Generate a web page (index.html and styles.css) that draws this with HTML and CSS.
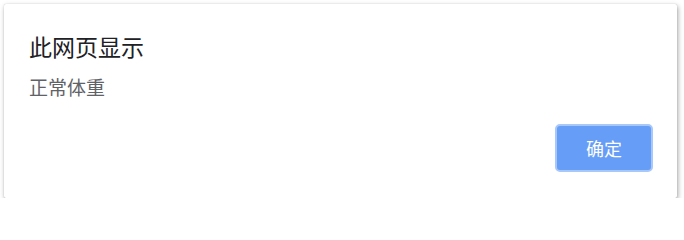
FILE: index.html
```html
<!DOCTYPE html>
<html lang="zh">
<head>
<meta charset="utf-8">
<link rel="stylesheet" href="styles.css">
</head>
<body>
<div class="dialog">
  <div class="title">此网页显示</div>
  <div class="message">正常体重</div>
  <div class="actions">
    <button class="ok">确定</button>
  </div>
</div>
</body>
</html>
```
FILE: styles.css
```css
html, body {
  margin: 0;
  padding: 0;
  background: #ffffff;
}
body {
  padding: 4px 0 0 4px;
  font-family: "Noto Sans CJK SC", "Noto Sans", sans-serif;
}
.dialog {
  box-sizing: border-box;
  width: 673px;
  height: 194px;
  background: #ffffff;
  border-radius: 2px;
  box-shadow: 0 0 1px rgba(0,0,0,0.25), 1px 2px 5px rgba(0,0,0,0.35);
  padding: 31px 24px 0 25px;
  display: flex;
  flex-direction: column;
}
.title {
  font-size: 23px;
  line-height: 23px;
  color: #202124;
}
.message {
  margin-top: 19px;
  font-size: 19px;
  line-height: 19px;
  color: #5f6368;
}
.actions {
  margin-top: 28px;
  display: flex;
  justify-content: flex-end;
}
.ok {
  box-sizing: border-box;
  width: 98px;
  height: 48px;
  background: #669df6;
  border: 2px solid #a8c7fa;
  border-radius: 5px;
  color: #ffffff;
  font-family: "Noto Sans CJK SC", "Noto Sans", sans-serif;
  font-size: 18px;
  line-height: 18px;
  padding: 0;
}
```
